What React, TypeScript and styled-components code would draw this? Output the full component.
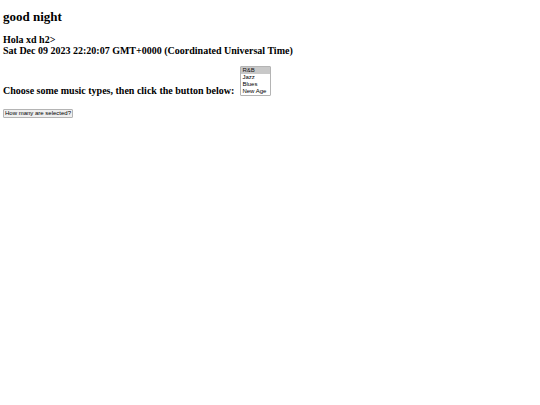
import React from 'react';
import styled, { createGlobalStyle } from 'styled-components';

const GlobalStyle = createGlobalStyle`
  body {
    margin: 0;
    background: #fff;
    color: #000;
    font-family: "Liberation Serif", "Times New Roman", serif;
  }
`;

const Page = styled.main`
  display: flex;
  flex-direction: column;
  align-items: flex-start;
  padding: 9px 3px;
`;

const Title = styled.h1`
  margin: 0;
  font-size: 13px;
  line-height: 16px;
`;

const Greeting = styled.h2`
  margin: 9px 0 0;
  font-size: 10px;
  line-height: 11px;
`;

const Form = styled.form`
  display: flex;
  flex-direction: column;
  align-items: flex-start;
  gap: 13px;
  margin-top: 10px;
`;

const Field = styled.div`
  display: flex;
  align-items: flex-end;
  gap: 6px;
`;

const Label = styled.label`
  font-size: 10px;
  font-weight: bold;
  line-height: 11px;
`;

const MusicList = styled.select`
  box-sizing: border-box;
  width: 31px;
  height: 30px;
  padding: 0;
  border: 1px solid #b4b4b4;
  border-radius: 1px;
  background: #fff;
  color: #000;
  font-family: "Liberation Sans", Arial, sans-serif;
  font-size: 6px;
  overflow: hidden;
`;

const Choice = styled.option`
  min-height: 7px;
  padding: 0 1px;
  line-height: 7px;

  &:checked {
    background: #c8c8c8 linear-gradient(#c8c8c8, #c8c8c8);
  }
`;

const CountButton = styled.button`
  padding: 0 1px;
  border: 1px solid #b4b4b4;
  border-radius: 1px;
  background: #efefef;
  color: #000;
  font-family: "Liberation Sans", Arial, sans-serif;
  font-size: 6px;
  line-height: 7px;
`;

const types = ['R&B', 'Jazz', 'Blues', 'New Age'];

export default function App() {
  return (
    <>
      <GlobalStyle />
      <Page>
        <Title>good night</Title>
        <Greeting>
          Hola xd h2&gt;
          <br />
          Sat Dec 09 2023 22:20:07 GMT+0000 (Coordinated Universal Time)
        </Greeting>
        <Form>
          <Field>
            <Label htmlFor="music">Choose some music types, then click the button below:</Label>
            <MusicList id="music" multiple size={4} defaultValue={['R&B']}>
              {types.map((type) => (
                <Choice key={type} value={type}>{type}</Choice>
              ))}
            </MusicList>
          </Field>
          <CountButton type="button">How many are selected?</CountButton>
        </Form>
      </Page>
    </>
  );
}
